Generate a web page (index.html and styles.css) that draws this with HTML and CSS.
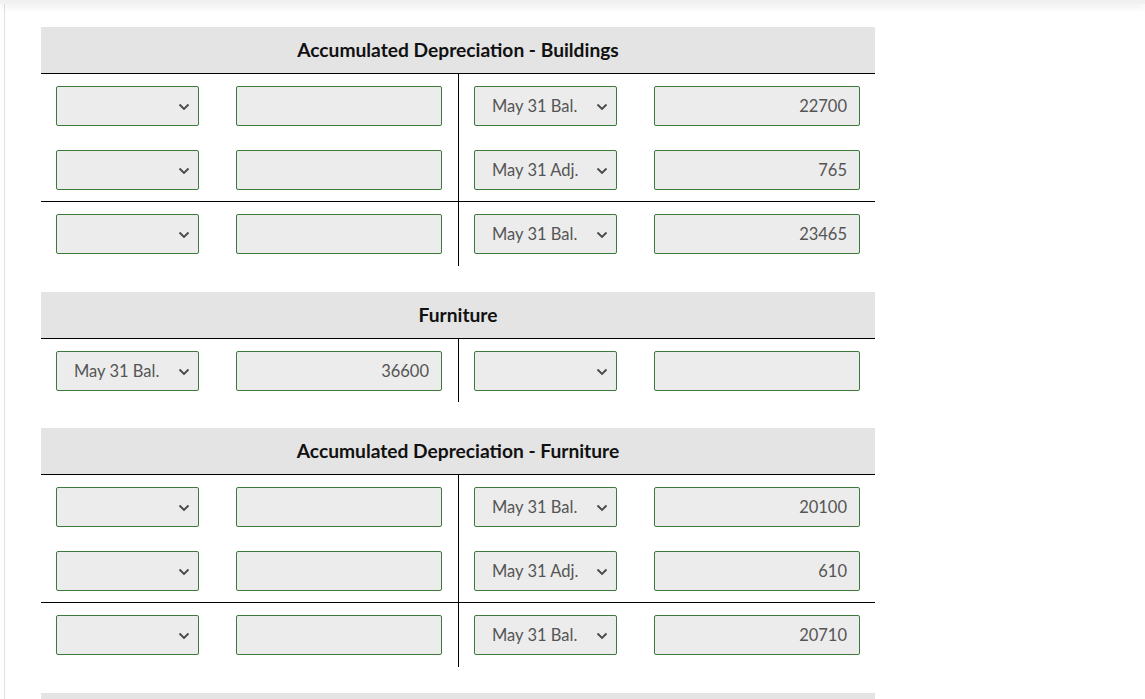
FILE: index.html
```html
<!DOCTYPE html>
<html>
<head>
<meta charset="utf-8">
<link rel="stylesheet" href="styles.css">
</head>
<body>
<div class="topbar"></div>
<div class="frame">

  <div class="taccount">
    <div class="thead">Accumulated Depreciation - Buildings</div>
    <div class="tbody">
      <div class="row">
        <div class="half left"><div class="sel"><span></span><svg class="chev" viewBox="0 0 12 8"><path d="M1.5 1.5 L6 6 L10.5 1.5"/></svg></div><div class="inp"></div></div>
        <div class="half right"><div class="sel"><span>May 31 Bal.</span><svg class="chev" viewBox="0 0 12 8"><path d="M1.5 1.5 L6 6 L10.5 1.5"/></svg></div><div class="inp">22700</div></div>
      </div>
      <div class="row total">
        <div class="half left"><div class="sel"><span></span><svg class="chev" viewBox="0 0 12 8"><path d="M1.5 1.5 L6 6 L10.5 1.5"/></svg></div><div class="inp"></div></div>
        <div class="half right"><div class="sel"><span>May 31 Adj.</span><svg class="chev" viewBox="0 0 12 8"><path d="M1.5 1.5 L6 6 L10.5 1.5"/></svg></div><div class="inp">765</div></div>
      </div>
      <div class="row">
        <div class="half left"><div class="sel"><span></span><svg class="chev" viewBox="0 0 12 8"><path d="M1.5 1.5 L6 6 L10.5 1.5"/></svg></div><div class="inp"></div></div>
        <div class="half right"><div class="sel"><span>May 31 Bal.</span><svg class="chev" viewBox="0 0 12 8"><path d="M1.5 1.5 L6 6 L10.5 1.5"/></svg></div><div class="inp">23465</div></div>
      </div>
    </div>
  </div>

  <div class="taccount short">
    <div class="thead">Furniture</div>
    <div class="tbody">
      <div class="row">
        <div class="half left"><div class="sel"><span>May 31 Bal.</span><svg class="chev" viewBox="0 0 12 8"><path d="M1.5 1.5 L6 6 L10.5 1.5"/></svg></div><div class="inp">36600</div></div>
        <div class="half right"><div class="sel"><span></span><svg class="chev" viewBox="0 0 12 8"><path d="M1.5 1.5 L6 6 L10.5 1.5"/></svg></div><div class="inp"></div></div>
      </div>
    </div>
  </div>

  <div class="taccount">
    <div class="thead">Accumulated Depreciation - Furniture</div>
    <div class="tbody">
      <div class="row">
        <div class="half left"><div class="sel"><span></span><svg class="chev" viewBox="0 0 12 8"><path d="M1.5 1.5 L6 6 L10.5 1.5"/></svg></div><div class="inp"></div></div>
        <div class="half right"><div class="sel"><span>May 31 Bal.</span><svg class="chev" viewBox="0 0 12 8"><path d="M1.5 1.5 L6 6 L10.5 1.5"/></svg></div><div class="inp">20100</div></div>
      </div>
      <div class="row total">
        <div class="half left"><div class="sel"><span></span><svg class="chev" viewBox="0 0 12 8"><path d="M1.5 1.5 L6 6 L10.5 1.5"/></svg></div><div class="inp"></div></div>
        <div class="half right"><div class="sel"><span>May 31 Adj.</span><svg class="chev" viewBox="0 0 12 8"><path d="M1.5 1.5 L6 6 L10.5 1.5"/></svg></div><div class="inp">610</div></div>
      </div>
      <div class="row">
        <div class="half left"><div class="sel"><span></span><svg class="chev" viewBox="0 0 12 8"><path d="M1.5 1.5 L6 6 L10.5 1.5"/></svg></div><div class="inp"></div></div>
        <div class="half right"><div class="sel"><span>May 31 Bal.</span><svg class="chev" viewBox="0 0 12 8"><path d="M1.5 1.5 L6 6 L10.5 1.5"/></svg></div><div class="inp">20710</div></div>
      </div>
    </div>
  </div>

  <div class="taccount">
    <div class="thead">&nbsp;</div>
  </div>

</div>
</body>
</html>
```

FILE: styles.css
```css
html, body {
  margin: 0;
  padding: 0;
  background: #ffffff;
  font-family: Lato, "Open Sans", "Liberation Sans", sans-serif;
  overflow: hidden;
}

.topbar {
  height: 4px;
  background: #f1f1f1;
  box-shadow: 0 2px 8px rgba(0, 0, 0, 0.12);
  position: relative;
  z-index: 1;
}

.frame {
  margin-left: 4px;
  border-left: 1px solid #e2e2e2;
  padding: 23px 0 0 36px;
  min-height: 700px;
}

.taccount {
  width: 834px;
  margin-bottom: 26px;
}

.taccount.short .half {
  padding-bottom: 11px;
}

.thead {
  height: 47px;
  background: #e4e4e4;
  border-bottom: 1px solid #000;
  display: flex;
  align-items: center;
  justify-content: center;
  font-weight: 700;
  font-size: 19.2px;
  color: #111;
  padding-bottom: 1px;
  box-sizing: border-box;
}

.row {
  display: flex;
}

.row.total {
  border-bottom: 1px solid #000;
}

.half {
  display: flex;
  justify-content: space-between;
  padding: 12px 0;
  box-sizing: border-box;
}

.row.total .half {
  padding-bottom: 11px;
}

.half.left {
  width: 418px;
  padding-left: 15px;
  padding-right: 16px;
  border-right: 1px solid #000;
}

.half.right {
  width: 416px;
  padding-left: 15px;
  padding-right: 15px;
}

.sel, .inp {
  height: 40px;
  box-sizing: border-box;
  border: 1px solid #3c7a3c;
  border-radius: 2px;
  background: #ececec;
  color: #555;
  font-size: 16.5px;
  display: flex;
  align-items: center;
}

.sel {
  width: 143px;
  padding-left: 17px;
  padding-right: 8px;
  justify-content: space-between;
}

.inp {
  width: 206px;
  justify-content: flex-end;
  padding-right: 12px;
}

.chev {
  width: 12px;
  height: 8px;
  flex: none;
  margin-top: 1px;
}

.chev path {
  fill: none;
  stroke: #4a4a4a;
  stroke-width: 1.9;
}
```
